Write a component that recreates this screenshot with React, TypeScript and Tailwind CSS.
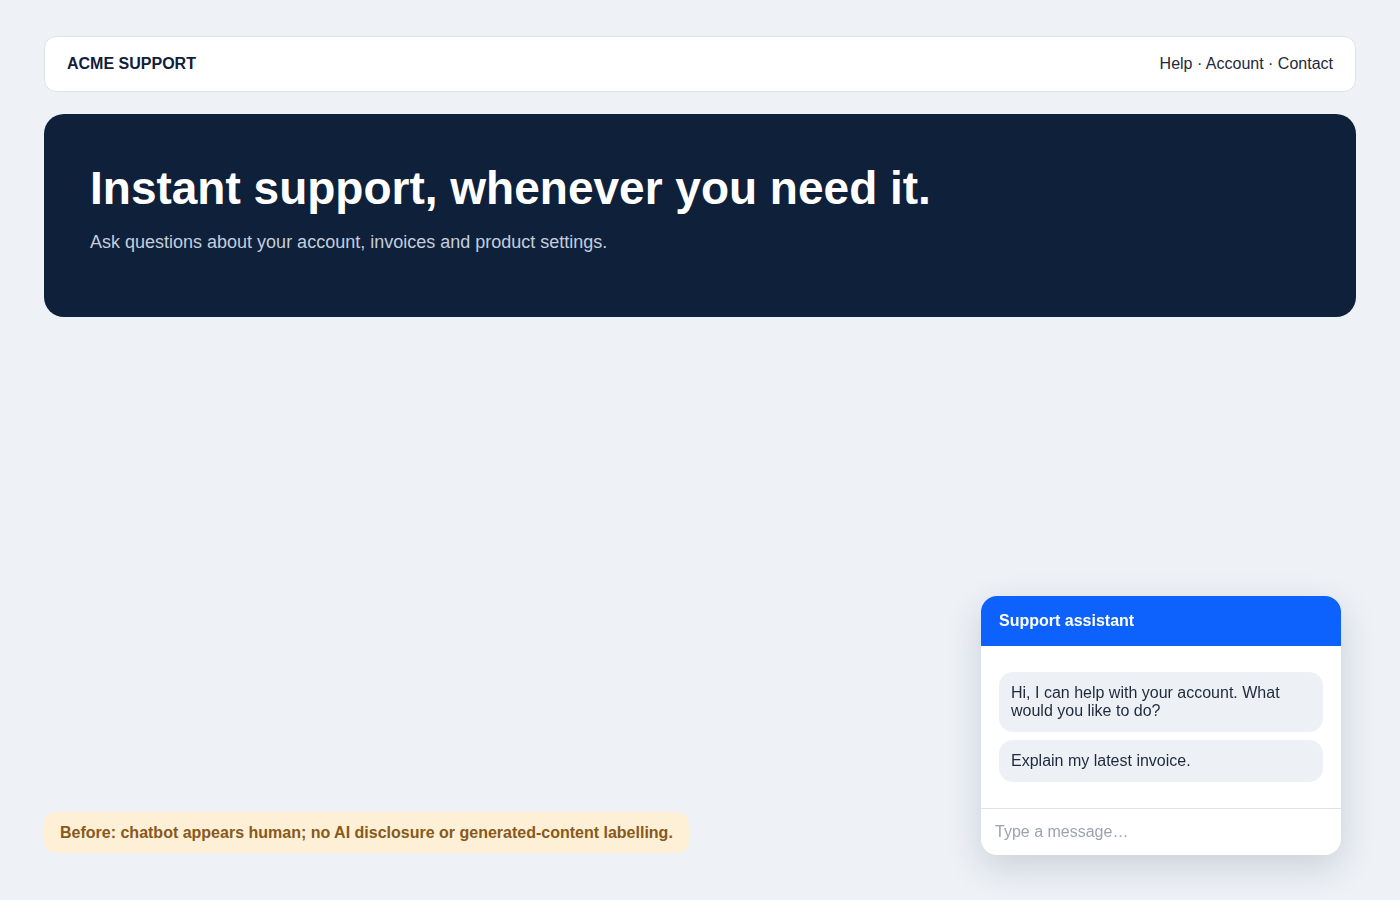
const navLinks = ['Help', 'Account', 'Contact'];

const messages = [
  'Hi, I can help with your account. What would you like to do?',
  'Explain my latest invoice.',
];

function ChatWidget() {
  return (
    <div className="fixed right-[59px] bottom-[45px] w-[360px] rounded-[16px] bg-white overflow-hidden shadow-[0_12px_36px_rgba(15,32,58,0.16)]">
      <div className="h-[50px] bg-[#0d62fe] px-[18px] flex items-center">
        <span className="text-white font-bold text-[16px]">Support assistant</span>
      </div>
      <div className="px-[18px] py-[26px] flex flex-col gap-[8px]">
        {messages.map((m) => (
          <div
            key={m}
            className="bg-[#edf1f6] rounded-[14px] px-[12px] py-[12px] text-[16px] leading-[18px] text-[#1e293b]"
          >
            {m}
          </div>
        ))}
      </div>
      <div className="border-t border-[#dde3ea] h-[47px] px-[14px] flex items-center">
        <input
          type="text"
          placeholder="Type a message…"
          className="w-full bg-transparent outline-none text-[16px] text-[#1e293b] placeholder:text-[#9ca3af]"
        />
      </div>
    </div>
  );
}

export default function App() {
  return (
    <main
      className="min-h-screen bg-[#eef2f7] px-[44px] pt-[36px] pb-[47px] flex flex-col"
      style={{ fontFamily: '"Liberation Sans", Arial, sans-serif' }}
    >
      <header className="h-[56px] bg-white border border-[#dde3ea] rounded-[12px] px-[22px] flex items-center justify-between">
        <span className="font-bold text-[16px] text-[#0f203a]">ACME SUPPORT</span>
        <nav className="text-[16px] text-[#1e293b]">
          {navLinks.map((l, i) => (
            <span key={l}>
              {i > 0 && <span> · </span>}
              <a href="#">{l}</a>
            </span>
          ))}
        </nav>
      </header>

      <section className="mt-[22px] h-[203px] bg-[#0f203a] rounded-[20px] px-[46px] pt-[46px]">
        <h1 className="text-white font-bold text-[46px] leading-[56px]">
          Instant support, whenever you need it.
        </h1>
        <p className="mt-[13px] text-[18px] text-[#c3cedc]">
          Ask questions about your account, invoices and product settings.
        </p>
      </section>

      <div className="mt-auto">
        <p className="inline-block bg-[#fef0d6] rounded-[12px] px-[16px] py-[11px] text-[16px] leading-[19px] font-bold text-[#87591a]">
          Before: chatbot appears human; no AI disclosure or generated-content labelling.
        </p>
      </div>

      <ChatWidget />
    </main>
  );
}
